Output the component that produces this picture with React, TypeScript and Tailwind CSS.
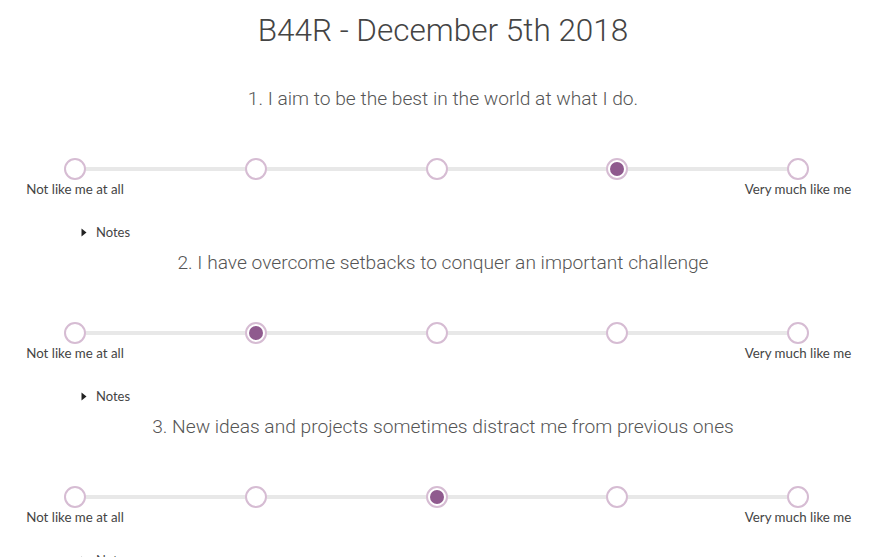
import React from "react";

const questions = [
  { text: "1. I aim to be the best in the world at what I do.", value: 3 },
  { text: "2. I have overcome setbacks to conquer an important challenge", value: 1 },
  { text: "3. New ideas and projects sometimes distract me from previous ones", value: 2 },
];

function Point({ selected, label }: { selected: boolean; label?: string }) {
  return (
    <div className="flex w-[22px] flex-col items-center">
      <div className="flex h-[22px] w-[22px] items-center justify-center rounded-full border-2 border-[#d6bcd3] bg-white">
        {selected && <div className="h-[14px] w-[14px] rounded-full bg-[#8f5a8e]" />}
      </div>
      <div className="h-[18px] whitespace-nowrap text-[13.3px] leading-[18px] text-[#444]">{label ?? ""}</div>
    </div>
  );
}

function Segment() {
  return <div className="mt-[9px] h-[4px] flex-1 bg-[#e8e8e8]" />;
}

function Question({ text, value }: { text: string; value: number }) {
  const labels = ["Not like me at all", undefined, undefined, undefined, "Very much like me"];
  return (
    <div className="flex flex-col">
      <div className="mt-[29px] h-[30px] text-center text-[19.2px] font-light leading-[30px] text-[#555]" style={{ fontFamily: "Roboto, sans-serif" }}>{text}</div>
      <div className="ml-[64px] mt-[44px] flex w-[745px] items-start">
        {labels.map((l, i) => (
          <React.Fragment key={i}>
            {i > 0 && <Segment />}
            <Point selected={i === value} label={l} />
          </React.Fragment>
        ))}
      </div>
      <div className="ml-[81px] mt-[25px] flex h-[18px] items-center gap-[9px] text-[13px] leading-[18px] text-[#444]">
        <svg width="6" height="9" viewBox="0 0 6 9"><path d="M0.5 0.5 L5.5 4.5 L0.5 8.5 Z" fill="#222" /></svg>
        <span>Notes</span>
      </div>
    </div>
  );
}

export default function App() {
  return (
    <div className="h-[557px] w-[886px] overflow-hidden bg-white" style={{ fontFamily: "Lato, 'Open Sans', sans-serif" }}>
      <div className="pt-[7px] text-center text-[31.5px] font-light leading-[48px] text-[#444]" style={{ fontFamily: "Roboto, sans-serif" }}>B44R - December 5th 2018</div>
      {questions.map((q, i) => (
        <div key={i} className={i === 0 ? "" : "-mt-[22px]"}>
          <Question text={q.text} value={q.value} />
        </div>
      ))}
    </div>
  );
}
